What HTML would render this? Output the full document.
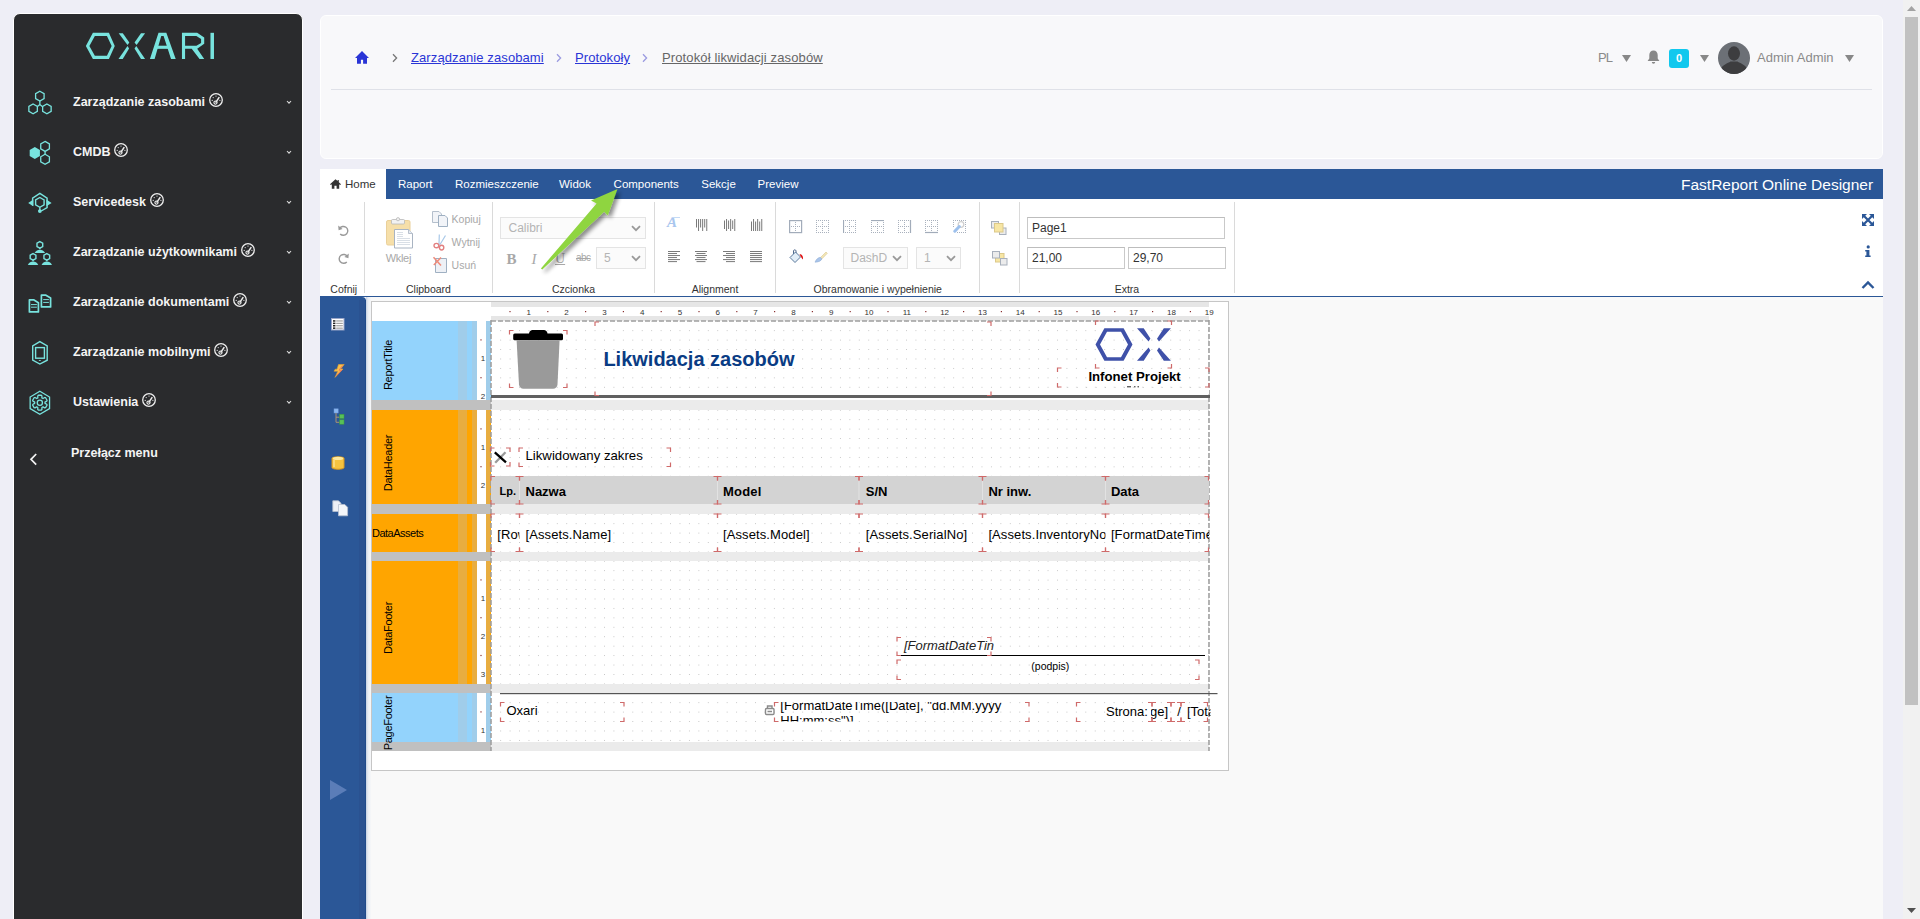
<!DOCTYPE html>
<html><head><meta charset="utf-8">
<style>
*{margin:0;padding:0;box-sizing:border-box}
html,body{width:1920px;height:919px;overflow:hidden;background:#eeeef6;font-family:"Liberation Sans",sans-serif}
.a{position:absolute}
.t{position:absolute;white-space:nowrap;line-height:1}
</style></head><body>

<div class="a" style="left:13px;top:13px;width:290px;height:920px;background:#2a2b2d;border:1px solid #fff;border-radius:7px 7px 0 0"></div>
<svg class="a" style="left:80px;top:25px" width="150" height="45" viewBox="0 0 1920 576"><g fill="#78e3de">
<path fill-rule="evenodd" d="M75 268L165 100H370L445 268L370 435H165ZM120 268L190 140H345L405 268L345 395H190Z"/>
<path d="M495 104H548L631 223L608 256Z"/><path d="M608 269L628 301L547 434H493Z"/>
<path d="M781 104H833L724 256L698 223Z"/><path d="M698 301L720 269L833 434H781Z"/>
<path d="M895 435H955L1040 140H1070L1165 435H1225L1105 100H1005Z"/><rect x="985" y="265" width="150" height="40"/>
<path fill-rule="evenodd" d="M1305 100H1500L1590 160V240L1500 305L1590 435H1530L1430 305H1345V435H1305ZM1345 140H1490L1550 180V230L1490 265H1345Z"/>
<rect x="1670" y="100" width="45" height="335"/></g></svg>
<svg class="a" style="left:24px;top:86px" width="32" height="32" viewBox="0 0 32 32"><g fill="none" stroke="#78e3de" stroke-width="1.3"><polygon points="15.85,5.30 20.09,7.75 20.09,12.65 15.85,15.10 11.61,12.65 11.61,7.75"/><polygon points="9.10,18.00 13.34,20.45 13.34,25.35 9.10,27.80 4.86,25.35 4.86,20.45"/><polygon points="22.90,18.00 27.14,20.45 27.14,25.35 22.90,27.80 18.66,25.35 18.66,20.45"/><path d="M15.85 15.1V18.6L13.4 20.5M15.85 18.6L18.3 20.5"/></g></svg>
<div class="t" style="left:73px;top:96px;font-size:12.5px;font-weight:bold;color:#f4f4f4">Zarządzanie zasobami</div>
<svg class="a" style="left:208.7px;top:93px" width="14" height="14" viewBox="0 0 14 14"><circle cx="7" cy="7" r="6.3" fill="none" stroke="#eee" stroke-width="1.3"/><path d="M6.6 9.6L10.3 4.2" stroke="#eee" stroke-width="1.5"/><circle cx="6.5" cy="9.6" r="1.6" fill="none" stroke="#eee" stroke-width="1.1"/><g fill="#eee"><circle cx="3.2" cy="7.4" r=".55"/><circle cx="4.2" cy="4.6" r=".55"/><circle cx="7" cy="3.1" r=".55"/><circle cx="10.9" cy="7.4" r=".55"/></g></svg>
<svg class="a" style="left:286px;top:100px" width="6" height="5" viewBox="0 0 6 5"><path d="M1 1L3 3.2L5 1" fill="none" stroke="#ddd" stroke-width="1.1"/></svg>
<svg class="a" style="left:24px;top:136px" width="32" height="32" viewBox="0 0 32 32"><polygon fill="#78e3de" stroke="none" points="10.80,11.10 15.91,14.05 15.91,19.95 10.80,22.90 5.69,19.95 5.69,14.05"/><g fill="none" stroke="#78e3de" stroke-width="1.3"><polygon points="21.07,5.40 25.40,7.90 25.40,12.90 21.07,15.40 16.74,12.90 16.74,7.90"/><polygon points="21.07,18.30 25.40,20.80 25.40,25.80 21.07,28.30 16.74,25.80 16.74,20.80"/><path d="M21.07 15.4V18.3"/></g></svg>
<div class="t" style="left:73px;top:146px;font-size:12.5px;font-weight:bold;color:#f4f4f4">CMDB</div>
<svg class="a" style="left:114.2px;top:143px" width="14" height="14" viewBox="0 0 14 14"><circle cx="7" cy="7" r="6.3" fill="none" stroke="#eee" stroke-width="1.3"/><path d="M6.6 9.6L10.3 4.2" stroke="#eee" stroke-width="1.5"/><circle cx="6.5" cy="9.6" r="1.6" fill="none" stroke="#eee" stroke-width="1.1"/><g fill="#eee"><circle cx="3.2" cy="7.4" r=".55"/><circle cx="4.2" cy="4.6" r=".55"/><circle cx="7" cy="3.1" r=".55"/><circle cx="10.9" cy="7.4" r=".55"/></g></svg>
<svg class="a" style="left:286px;top:150px" width="6" height="5" viewBox="0 0 6 5"><path d="M1 1L3 3.2L5 1" fill="none" stroke="#ddd" stroke-width="1.1"/></svg>
<svg class="a" style="left:24px;top:186px" width="32" height="32" viewBox="0 0 32 32"><g fill="none" stroke="#78e3de" stroke-width="1.4"><polygon points="15.85,11.50 20.09,13.95 20.09,18.85 15.85,21.30 11.61,18.85 11.61,13.95"/><path d="M8.6 19.8V12.1L15.85 7.3L23.1 12.1V21.6L17.2 25"/><path d="M15.85 21.3V24.5"/></g><g fill="#78e3de"><path d="M9.3 13.5L4.2 17L9.3 20.3Z"/><path d="M22.4 13.5L27.6 17L22.4 20.3Z"/><circle cx="15.85" cy="25.1" r="1.9"/></g></svg>
<div class="t" style="left:73px;top:196px;font-size:12.5px;font-weight:bold;color:#f4f4f4">Servicedesk</div>
<svg class="a" style="left:149.7px;top:193px" width="14" height="14" viewBox="0 0 14 14"><circle cx="7" cy="7" r="6.3" fill="none" stroke="#eee" stroke-width="1.3"/><path d="M6.6 9.6L10.3 4.2" stroke="#eee" stroke-width="1.5"/><circle cx="6.5" cy="9.6" r="1.6" fill="none" stroke="#eee" stroke-width="1.1"/><g fill="#eee"><circle cx="3.2" cy="7.4" r=".55"/><circle cx="4.2" cy="4.6" r=".55"/><circle cx="7" cy="3.1" r=".55"/><circle cx="10.9" cy="7.4" r=".55"/></g></svg>
<svg class="a" style="left:286px;top:200px" width="6" height="5" viewBox="0 0 6 5"><path d="M1 1L3 3.2L5 1" fill="none" stroke="#ddd" stroke-width="1.1"/></svg>
<svg class="a" style="left:24px;top:236px" width="32" height="32" viewBox="0 0 32 32"><polygon fill="none" stroke="#78e3de" stroke-width="1.4" points="15.85,5.60 18.71,7.25 18.71,10.55 15.85,12.20 12.99,10.55 12.99,7.25"/><path fill="#78e3de" d="M15.25 11.9h1.2v1.4h-1.2z"/><path fill="#78e3de" d="M10.649999999999999 17.1C11.85 14.500000000000002 13.85 13.8 15.85 13.8C17.85 13.8 19.85 14.500000000000002 21.05 17.1Z"/><polygon fill="none" stroke="#78e3de" stroke-width="1.4" points="9.05,17.60 11.91,19.25 11.91,22.55 9.05,24.20 6.19,22.55 6.19,19.25"/><path fill="#78e3de" d="M8.450000000000001 23.9h1.2v1.4h-1.2z"/><path fill="#78e3de" d="M3.8500000000000005 28.9C5.050000000000001 26.299999999999997 7.050000000000001 25.599999999999998 9.05 25.599999999999998C11.05 25.599999999999998 13.05 26.299999999999997 14.25 28.9Z"/><polygon fill="none" stroke="#78e3de" stroke-width="1.4" points="22.80,17.60 25.66,19.25 25.66,22.55 22.80,24.20 19.94,22.55 19.94,19.25"/><path fill="#78e3de" d="M22.2 23.9h1.2v1.4h-1.2z"/><path fill="#78e3de" d="M17.6 28.9C18.8 26.299999999999997 20.8 25.599999999999998 22.8 25.599999999999998C24.8 25.599999999999998 26.8 26.299999999999997 28.0 28.9Z"/></svg>
<div class="t" style="left:73px;top:246px;font-size:12.5px;font-weight:bold;color:#f4f4f4">Zarządzanie użytkownikami</div>
<svg class="a" style="left:240.6px;top:243px" width="14" height="14" viewBox="0 0 14 14"><circle cx="7" cy="7" r="6.3" fill="none" stroke="#eee" stroke-width="1.3"/><path d="M6.6 9.6L10.3 4.2" stroke="#eee" stroke-width="1.5"/><circle cx="6.5" cy="9.6" r="1.6" fill="none" stroke="#eee" stroke-width="1.1"/><g fill="#eee"><circle cx="3.2" cy="7.4" r=".55"/><circle cx="4.2" cy="4.6" r=".55"/><circle cx="7" cy="3.1" r=".55"/><circle cx="10.9" cy="7.4" r=".55"/></g></svg>
<svg class="a" style="left:286px;top:250px" width="6" height="5" viewBox="0 0 6 5"><path d="M1 1L3 3.2L5 1" fill="none" stroke="#ddd" stroke-width="1.1"/></svg>
<svg class="a" style="left:24px;top:286px" width="32" height="32" viewBox="0 0 32 32"><g fill="none" stroke="#78e3de" stroke-width="1.7" stroke-linejoin="round"><path d="M5.4 13.8H9.6L14.4 16.8V25.9H5.4Z"/><path d="M17.4 9.1H21.5L26.6 12.1V20.9H17.4Z"/></g><g stroke="#78e3de" stroke-width="1"><path d="M7 18.6H12.9M7 21.2H12.9M19.2 13.6H24.9M19.2 16.4H24.9"/></g></svg>
<div class="t" style="left:73px;top:296px;font-size:12.5px;font-weight:bold;color:#f4f4f4">Zarządzanie dokumentami</div>
<svg class="a" style="left:233.0px;top:293px" width="14" height="14" viewBox="0 0 14 14"><circle cx="7" cy="7" r="6.3" fill="none" stroke="#eee" stroke-width="1.3"/><path d="M6.6 9.6L10.3 4.2" stroke="#eee" stroke-width="1.5"/><circle cx="6.5" cy="9.6" r="1.6" fill="none" stroke="#eee" stroke-width="1.1"/><g fill="#eee"><circle cx="3.2" cy="7.4" r=".55"/><circle cx="4.2" cy="4.6" r=".55"/><circle cx="7" cy="3.1" r=".55"/><circle cx="10.9" cy="7.4" r=".55"/></g></svg>
<svg class="a" style="left:286px;top:300px" width="6" height="5" viewBox="0 0 6 5"><path d="M1 1L3 3.2L5 1" fill="none" stroke="#ddd" stroke-width="1.1"/></svg>
<svg class="a" style="left:24px;top:336px" width="32" height="32" viewBox="0 0 32 32"><g fill="none" stroke="#78e3de" stroke-width="1.4"><path d="M15.85 5.6L23.2 9.8V24.2L15.85 28L8.7 24.2V9.8Z"/><rect x="11.6" y="11.6" width="8.8" height="10.6"/></g><ellipse fill="#78e3de" cx="15.85" cy="24.5" rx="1.1" ry="0.6"/></svg>
<div class="t" style="left:73px;top:346px;font-size:12.5px;font-weight:bold;color:#f4f4f4">Zarządzanie mobilnymi</div>
<svg class="a" style="left:214.2px;top:343px" width="14" height="14" viewBox="0 0 14 14"><circle cx="7" cy="7" r="6.3" fill="none" stroke="#eee" stroke-width="1.3"/><path d="M6.6 9.6L10.3 4.2" stroke="#eee" stroke-width="1.5"/><circle cx="6.5" cy="9.6" r="1.6" fill="none" stroke="#eee" stroke-width="1.1"/><g fill="#eee"><circle cx="3.2" cy="7.4" r=".55"/><circle cx="4.2" cy="4.6" r=".55"/><circle cx="7" cy="3.1" r=".55"/><circle cx="10.9" cy="7.4" r=".55"/></g></svg>
<svg class="a" style="left:286px;top:350px" width="6" height="5" viewBox="0 0 6 5"><path d="M1 1L3 3.2L5 1" fill="none" stroke="#ddd" stroke-width="1.1"/></svg>
<svg class="a" style="left:24px;top:386px" width="32" height="32" viewBox="0 0 32 32"><g fill="none" stroke="#78e3de" stroke-width="1.3"><polygon points="15.85,5.26 25.55,11.03 25.55,22.57 15.85,28.34 6.15,22.57 6.15,11.03"/><polygon stroke-linejoin="round" points="13.77,9.91 14.40,9.24 17.30,9.24 17.93,9.91 17.88,11.91 18.98,12.55 20.69,11.51 21.59,11.71 23.04,14.23 22.77,15.10 21.01,16.07 21.01,17.33 22.77,18.30 23.04,19.17 21.59,21.69 20.69,21.89 18.98,20.85 17.88,21.49 17.93,23.49 17.30,24.16 14.40,24.16 13.77,23.49 13.82,21.49 12.72,20.85 11.01,21.89 10.11,21.69 8.66,19.17 8.93,18.30 10.69,17.33 10.69,16.07 8.93,15.10 8.66,14.23 10.11,11.71 11.01,11.51 12.72,12.55 13.82,11.91"/><circle cx="15.85" cy="16.7" r="2.6"/></g></svg>
<div class="t" style="left:73px;top:396px;font-size:12.5px;font-weight:bold;color:#f4f4f4">Ustawienia</div>
<svg class="a" style="left:142.0px;top:393px" width="14" height="14" viewBox="0 0 14 14"><circle cx="7" cy="7" r="6.3" fill="none" stroke="#eee" stroke-width="1.3"/><path d="M6.6 9.6L10.3 4.2" stroke="#eee" stroke-width="1.5"/><circle cx="6.5" cy="9.6" r="1.6" fill="none" stroke="#eee" stroke-width="1.1"/><g fill="#eee"><circle cx="3.2" cy="7.4" r=".55"/><circle cx="4.2" cy="4.6" r=".55"/><circle cx="7" cy="3.1" r=".55"/><circle cx="10.9" cy="7.4" r=".55"/></g></svg>
<svg class="a" style="left:286px;top:400px" width="6" height="5" viewBox="0 0 6 5"><path d="M1 1L3 3.2L5 1" fill="none" stroke="#ddd" stroke-width="1.1"/></svg>
<svg class="a" style="left:28px;top:452px" width="12" height="15" viewBox="0 0 12 15"><path d="M8.2 2L3 7.3L8.2 12.6" fill="none" stroke="#f4f4f4" stroke-width="1.7"/></svg>
<div class="t" style="left:71px;top:447px;font-size:12.5px;font-weight:bold;color:#f4f4f4">Przełącz menu</div>
<div class="a" style="left:320px;top:15px;width:1563px;height:144px;background:#f8f8fa;border:1px solid #fff;border-radius:6px"></div>
<div class="a" style="left:331px;top:89px;width:1541px;height:1px;background:#dfe1e8"></div>
<svg class="a" style="left:354px;top:50px" width="16" height="15" viewBox="0 0 16 15"><path fill="#2a35d6" d="M8 0.9L1 8.1H3V13.8H6.9V9.8H9.1V13.8H13V8.1H15Z"/></svg>
<svg class="a" style="left:392px;top:53px" width="6" height="10" viewBox="0 0 6 10"><path d="M1 1.2L4.6 5L1 8.8" fill="none" stroke="#777" stroke-width="1.3"/></svg>
<div class="t" style="left:411px;top:51px;font-size:13px;letter-spacing:0.1px;color:#2a35d6;text-decoration:underline;text-underline-offset:1px">Zarządzanie zasobami</div>
<svg class="a" style="left:556px;top:53px" width="6" height="10" viewBox="0 0 6 10"><path d="M1 1.2L4.6 5L1 8.8" fill="none" stroke="#9b9be0" stroke-width="1.3"/></svg>
<div class="t" style="left:575px;top:51px;font-size:13px;letter-spacing:0.1px;color:#2a35d6;text-decoration:underline;text-underline-offset:1px">Protokoły</div>
<svg class="a" style="left:642px;top:53px" width="6" height="10" viewBox="0 0 6 10"><path d="M1 1.2L4.6 5L1 8.8" fill="none" stroke="#9b9be0" stroke-width="1.3"/></svg>
<div class="t" style="left:662px;top:51px;font-size:13px;letter-spacing:0.12px;color:#666;text-decoration:underline;text-underline-offset:1px">Protokół likwidacji zasobów</div>
<div class="t" style="left:1598px;top:51px;font-size:13px;color:#8a8a8a;letter-spacing:-0.8px">PL</div>
<svg class="a" style="left:1622px;top:54.5px" width="9" height="7" viewBox="0 0 9 7"><path d="M0 0H9L4.5 7Z" fill="#888"/></svg>
<svg class="a" style="left:1647px;top:50px" width="13" height="14" viewBox="0 0 13 14"><path fill="#888" d="M6.5 0.5C4 0.5 2.3 2.5 2.3 5V8.6L0.6 11H12.4L10.7 8.6V5C10.7 2.5 9 0.5 6.5 0.5Z"/><path fill="#888" d="M4.8 12A1.7 1.7 0 0 0 8.2 12Z"/></svg>
<div class="a" style="left:1669px;top:49px;width:20px;height:19px;background:#11c8ee;border-radius:3px"></div>
<div class="t" style="left:1669px;top:53px;width:20px;text-align:center;font-size:11px;font-weight:bold;color:#fff">0</div>
<svg class="a" style="left:1699.5px;top:54.5px" width="9" height="7" viewBox="0 0 9 7"><path d="M0 0H9L4.5 7Z" fill="#888"/></svg>
<svg class="a" style="left:1718px;top:42px" width="32" height="32" viewBox="0 0 32 32"><defs><clipPath id="av"><circle cx="16" cy="16" r="16"/></clipPath></defs><circle cx="16" cy="16" r="16" fill="#6c7076"/><g clip-path="url(#av)" fill="#3d3d3f"><ellipse cx="16" cy="11.5" rx="6" ry="7.2"/><path d="M2 29C4 22 10 21.5 12.5 19.5H19.5C22 21.5 28 22 30 29V32H2Z"/></g></svg>
<div class="t" style="left:1757px;top:51px;font-size:13px;color:#8a8a8a">Admin Admin</div>
<svg class="a" style="left:1845px;top:54.5px" width="9" height="7" viewBox="0 0 9 7"><path d="M0 0H9L4.5 7Z" fill="#888"/></svg>
<div class="a" style="left:1903px;top:0;width:17px;height:919px;background:#f1f1f1"></div>
<div class="a" style="left:1905px;top:17px;width:13px;height:688px;background:#c1c1c1"></div>
<svg class="a" style="left:1907px;top:6px" width="9" height="5" viewBox="0 0 9 5"><path d="M0 5H9L4.5 0Z" fill="#a3a3a3"/></svg>
<svg class="a" style="left:1907px;top:908px" width="9" height="5" viewBox="0 0 9 5"><path d="M0 0H9L4.5 5Z" fill="#505050"/></svg>
<div class="a" style="left:320px;top:169px;width:1563px;height:750px;background:#f9f9f9"></div>
<div class="a" style="left:320px;top:169px;width:1563px;height:30px;background:#2b5797"></div>
<div class="a" style="left:320px;top:169px;width:66px;height:30px;background:#fff"></div>
<div class="a" style="left:320px;top:199px;width:1563px;height:97px;background:#fff"></div>
<div class="a" style="left:320px;top:296px;width:1563px;height:1px;background:#2b5797"></div>
<svg class="a" style="left:330px;top:179px" width="11" height="10" viewBox="0 0 11 10"><path fill="#333" d="M5.5 0.3L0 5.2L0.9 6.1L1.8 5.3V9.7H4.4V6.8H6.6V9.7H9.2V5.3L10.1 6.1L11 5.2L8.8 3.2V0.9H7.6V2.1Z"/></svg>
<div class="t" style="left:345px;top:178.8px;font-size:11.5px;color:#333">Home</div>
<div class="t" style="left:398px;top:178.8px;font-size:11.5px;color:#fff">Raport</div>
<div class="t" style="left:455px;top:178.8px;font-size:11.5px;color:#fff">Rozmieszczenie</div>
<div class="t" style="left:559px;top:178.8px;font-size:11.5px;color:#fff">Widok</div>
<div class="t" style="left:613.6px;top:178.8px;font-size:11.5px;color:#fff">Components</div>
<div class="t" style="left:701.3px;top:178.8px;font-size:11.5px;color:#fff">Sekcje</div>
<div class="t" style="left:757.6px;top:178.8px;font-size:11.5px;color:#fff">Preview</div>
<div class="t" style="left:1681px;top:177.2px;font-size:15.5px;color:#fff">FastReport Online Designer</div>
<div class="a" style="left:364px;top:202px;width:1px;height:91px;background:#dadada"></div>
<div class="a" style="left:492px;top:202px;width:1px;height:91px;background:#dadada"></div>
<div class="a" style="left:654px;top:202px;width:1px;height:91px;background:#dadada"></div>
<div class="a" style="left:775px;top:202px;width:1px;height:91px;background:#dadada"></div>
<div class="a" style="left:979px;top:202px;width:1px;height:91px;background:#dadada"></div>
<div class="a" style="left:1019px;top:202px;width:1px;height:91px;background:#dadada"></div>
<div class="a" style="left:1234px;top:202px;width:1px;height:91px;background:#dadada"></div>
<div class="t" style="left:243.75px;width:200px;text-align:center;top:283.8px;font-size:10.5px;color:#333">Cofnij</div>
<div class="t" style="left:328.5px;width:200px;text-align:center;top:283.8px;font-size:10.5px;color:#333">Clipboard</div>
<div class="t" style="left:473.5px;width:200px;text-align:center;top:283.8px;font-size:10.5px;color:#333">Czcionka</div>
<div class="t" style="left:615px;width:200px;text-align:center;top:283.8px;font-size:10.5px;color:#333">Alignment</div>
<div class="t" style="left:777.75px;width:200px;text-align:center;top:283.8px;font-size:10.5px;color:#333">Obramowanie i wypełnienie</div>
<div class="t" style="left:1026.9px;width:200px;text-align:center;top:283.8px;font-size:10.5px;color:#333">Extra</div>
<svg class="a" style="left:337px;top:224px" width="13" height="13" viewBox="0 0 13 13"><path d="M2.6 4.6A4.4 4.4 0 1 1 3.2 9.9" fill="none" stroke="#999" stroke-width="1.4"/><path d="M1.2 1.6L1.6 6.2L5.6 5Z" fill="#999"/></svg>
<svg class="a" style="left:337px;top:252px" width="13" height="13" viewBox="0 0 13 13"><path d="M10.4 4.6A4.4 4.4 0 1 0 9.8 9.9" fill="none" stroke="#999" stroke-width="1.4"/><path d="M11.8 1.6L11.4 6.2L7.4 5Z" fill="#999"/></svg>
<svg class="a" style="left:385px;top:217px" width="29" height="33" viewBox="0 0 29 33">
<rect x="1.5" y="3.5" width="23.5" height="24.5" rx="1.5" fill="#f6dfa9" stroke="#ead09a"/>
<rect x="6.5" y="2.5" width="13" height="4.5" rx="1" fill="#f2f2f2" stroke="#b8b8b8" stroke-width=".8"/>
<circle cx="13" cy="2.2" r="1.6" fill="#f2f2f2" stroke="#b8b8b8" stroke-width=".8"/>
<path d="M9.5 12.5H23.5L27.5 16.5V31H9.5Z" fill="#fff" stroke="#a9b4c2"/>
<path d="M23.5 12.5V16.5H27.5" fill="#e6ebf2" stroke="#a9b4c2" stroke-width=".8"/>
<g stroke="#d5dbe3" stroke-width=".9"><path d="M12 15.5H18M12 17.5H18M12 19.5H18M12 21.5H25M12 23.5H25M12 25.5H25M12 27.5H25"/></g>
</svg>
<div class="t" style="left:385.7px;top:252.8px;font-size:11px;letter-spacing:-0.3px;color:#a8a8a8">Wklej</div>
<svg class="a" style="left:431px;top:210px" width="18" height="18" viewBox="0 0 18 18">
<path d="M1.5 1.5H8L10.5 4V12.5H1.5Z" fill="#f2f4f8" stroke="#b4bfcc"/>
<path d="M7.5 5.5H14L16.5 8V16.5H7.5Z" fill="#f2f4f8" stroke="#9fb0c2"/>
</svg>
<div class="t" style="left:451.6px;top:213.5px;font-size:10.5px;color:#a8a8a8">Kopiuj</div>
<svg class="a" style="left:433px;top:233px" width="14" height="18" viewBox="0 0 14 18">
<path d="M6.3 1.5L6 12M12.5 2.5L7 11.5" stroke="#a8c8e8" stroke-width="1.2" fill="none"/>
<ellipse cx="3.4" cy="12.6" rx="2.4" ry="2.2" fill="none" stroke="#e28080" stroke-width="1.4"/>
<ellipse cx="8.6" cy="14.6" rx="2.2" ry="2.4" fill="none" stroke="#e28080" stroke-width="1.4"/>
</svg>
<div class="t" style="left:451.6px;top:236.8px;font-size:10.5px;color:#a8a8a8">Wytnij</div>
<svg class="a" style="left:432px;top:256px" width="17" height="18" viewBox="0 0 17 18">
<path d="M3.5 2.5H14.5V16.5H3.5Z" fill="#eef1f6" stroke="#9fb0c2"/>
<path d="M1.5 1.2L9 9.5M9 1.5L1.8 9" stroke="#ef8b7a" stroke-width="1.5"/>
</svg>
<div class="t" style="left:451.6px;top:259.6px;font-size:10.5px;color:#a8a8a8">Usuń</div>
<div class="a" style="left:500px;top:217px;width:146px;height:22px;background:#fbfbfb;border:1px solid #e4e4e4"></div>
<div class="t" style="left:508.5px;top:221.8px;font-size:12px;color:#b4b4b4">Calibri</div>
<svg class="a" style="left:631px;top:224.5px" width="10" height="7" viewBox="0 0 10 7"><path d="M1 1.2L5 5.2L9 1.2" fill="none" stroke="#999" stroke-width="1.8"/></svg>
<div class="a" style="left:596px;top:247px;width:50px;height:22px;background:#fbfbfb;border:1px solid #e4e4e4"></div>
<div class="t" style="left:604px;top:251.8px;font-size:12px;color:#b4b4b4">5</div>
<svg class="a" style="left:631px;top:254.5px" width="10" height="7" viewBox="0 0 10 7"><path d="M1 1.2L5 5.2L9 1.2" fill="none" stroke="#999" stroke-width="1.8"/></svg>
<div class="t" style="left:506.5px;top:251.5px;font-family:'Liberation Serif',serif;font-weight:bold;font-size:15px;color:#a8a8a8">B</div>
<div class="t" style="left:531.5px;top:251.5px;font-family:'Liberation Serif',serif;font-style:italic;font-size:15px;color:#a8a8a8">I</div>
<div class="t" style="left:555px;top:251.5px;font-family:'Liberation Serif',serif;font-size:14px;color:#a8a8a8;text-decoration:underline">U</div>
<div class="t" style="left:576px;top:253px;font-size:10px;letter-spacing:-0.5px;color:#a8a8a8;text-decoration:line-through">abc</div>
<div class="t" style="left:667px;top:215px;font-family:'Liberation Serif',serif;font-weight:bold;font-style:italic;font-size:15px;color:#a9c6ee">A</div>
<div class="a" style="left:672px;top:217px;width:8px;height:1px;background:#c5daf5"></div>
<svg class="a" style="left:696px;top:218px" width="13" height="14" viewBox="0 0 13 14"><g stroke="#7a7a7a" stroke-width="1"><path d="M0.50 1V9.5"/><path d="M2.55 1V13"/><path d="M4.60 1V9.5"/><path d="M6.65 1V13"/><path d="M8.70 1V9.5"/><path d="M10.75 1V13"/></g></svg>
<svg class="a" style="left:724px;top:218px" width="13" height="14" viewBox="0 0 13 14"><g stroke="#7a7a7a" stroke-width="1"><path d="M0.50 2.5V11"/><path d="M2.55 1V13"/><path d="M4.60 2.5V11"/><path d="M6.65 1V13"/><path d="M8.70 2.5V11"/><path d="M10.75 1V13"/></g></svg>
<svg class="a" style="left:751px;top:218px" width="13" height="14" viewBox="0 0 13 14"><g stroke="#7a7a7a" stroke-width="1"><path d="M0.50 3.5V13"/><path d="M2.55 1V13"/><path d="M4.60 3.5V13"/><path d="M6.65 1V13"/><path d="M8.70 3.5V13"/><path d="M10.75 1V13"/></g></svg>
<svg class="a" style="left:668px;top:251px" width="13" height="12" viewBox="0 0 13 12"><g stroke="#7a7a7a" stroke-width="1"><path d="M0 0.50H12"/><path d="M0 2.52H9"/><path d="M0 4.54H12"/><path d="M0 6.56H9"/><path d="M0 8.58H12"/><path d="M0 10.60H9"/></g></svg>
<svg class="a" style="left:695px;top:251px" width="13" height="12" viewBox="0 0 13 12"><g stroke="#7a7a7a" stroke-width="1"><path d="M0 0.50H12"/><path d="M1.5 2.52H10.5"/><path d="M0 4.54H12"/><path d="M1.5 6.56H10.5"/><path d="M0 8.58H12"/><path d="M1.5 10.60H10.5"/></g></svg>
<svg class="a" style="left:723px;top:251px" width="13" height="12" viewBox="0 0 13 12"><g stroke="#7a7a7a" stroke-width="1"><path d="M0 0.50H12"/><path d="M3 2.52H12"/><path d="M0 4.54H12"/><path d="M3 6.56H12"/><path d="M0 8.58H12"/><path d="M3 10.60H12"/></g></svg>
<svg class="a" style="left:750px;top:251px" width="13" height="12" viewBox="0 0 13 12"><g stroke="#7a7a7a" stroke-width="1"><path d="M0 0.50H12"/><path d="M0 2.52H12"/><path d="M0 4.54H12"/><path d="M0 6.56H12"/><path d="M0 8.58H12"/><path d="M0 10.60H12"/></g></svg>
<svg class="a" style="left:789px;top:220px" width="14" height="14" viewBox="0 0 14 14"><rect x=".6" y=".6" width="12" height="12" fill="none" stroke="#a2acba" stroke-width="1.2"/><g fill="#a9b1bd"><rect x="6" y="2" width="1" height="1"/><rect x="6" y="4" width="1" height="1"/><rect x="6" y="8" width="1" height="1"/><rect x="6" y="10" width="1" height="1"/><rect x="2" y="6" width="1" height="1"/><rect x="4" y="6" width="1" height="1"/><rect x="6" y="6" width="1" height="1"/><rect x="8" y="6" width="1" height="1"/><rect x="10" y="6" width="1" height="1"/></g></svg>
<svg class="a" style="left:816px;top:220px" width="14" height="14" viewBox="0 0 14 14"><g fill="#a9b1bd"><rect x="0" y="0" width="1" height="1"/><rect x="0" y="2" width="1" height="1"/><rect x="0" y="4" width="1" height="1"/><rect x="0" y="6" width="1" height="1"/><rect x="0" y="8" width="1" height="1"/><rect x="0" y="10" width="1" height="1"/><rect x="0" y="12" width="1" height="1"/><rect x="2" y="0" width="1" height="1"/><rect x="2" y="6" width="1" height="1"/><rect x="2" y="12" width="1" height="1"/><rect x="4" y="0" width="1" height="1"/><rect x="4" y="6" width="1" height="1"/><rect x="4" y="12" width="1" height="1"/><rect x="6" y="0" width="1" height="1"/><rect x="6" y="2" width="1" height="1"/><rect x="6" y="4" width="1" height="1"/><rect x="6" y="6" width="1" height="1"/><rect x="6" y="8" width="1" height="1"/><rect x="6" y="10" width="1" height="1"/><rect x="6" y="12" width="1" height="1"/><rect x="8" y="0" width="1" height="1"/><rect x="8" y="6" width="1" height="1"/><rect x="8" y="12" width="1" height="1"/><rect x="10" y="0" width="1" height="1"/><rect x="10" y="6" width="1" height="1"/><rect x="10" y="12" width="1" height="1"/><rect x="12" y="0" width="1" height="1"/><rect x="12" y="2" width="1" height="1"/><rect x="12" y="4" width="1" height="1"/><rect x="12" y="6" width="1" height="1"/><rect x="12" y="8" width="1" height="1"/><rect x="12" y="10" width="1" height="1"/><rect x="12" y="12" width="1" height="1"/></g></svg>
<svg class="a" style="left:843px;top:220px" width="14" height="14" viewBox="0 0 14 14"><g fill="#a9b1bd"><rect x="0" y="0" width="1" height="1"/><rect x="0" y="2" width="1" height="1"/><rect x="0" y="4" width="1" height="1"/><rect x="0" y="6" width="1" height="1"/><rect x="0" y="8" width="1" height="1"/><rect x="0" y="10" width="1" height="1"/><rect x="0" y="12" width="1" height="1"/><rect x="2" y="0" width="1" height="1"/><rect x="2" y="6" width="1" height="1"/><rect x="2" y="12" width="1" height="1"/><rect x="4" y="0" width="1" height="1"/><rect x="4" y="6" width="1" height="1"/><rect x="4" y="12" width="1" height="1"/><rect x="6" y="0" width="1" height="1"/><rect x="6" y="2" width="1" height="1"/><rect x="6" y="4" width="1" height="1"/><rect x="6" y="6" width="1" height="1"/><rect x="6" y="8" width="1" height="1"/><rect x="6" y="10" width="1" height="1"/><rect x="6" y="12" width="1" height="1"/><rect x="8" y="0" width="1" height="1"/><rect x="8" y="6" width="1" height="1"/><rect x="8" y="12" width="1" height="1"/><rect x="10" y="0" width="1" height="1"/><rect x="10" y="6" width="1" height="1"/><rect x="10" y="12" width="1" height="1"/><rect x="12" y="0" width="1" height="1"/><rect x="12" y="2" width="1" height="1"/><rect x="12" y="4" width="1" height="1"/><rect x="12" y="6" width="1" height="1"/><rect x="12" y="8" width="1" height="1"/><rect x="12" y="10" width="1" height="1"/><rect x="12" y="12" width="1" height="1"/></g><path d="M.5 0V13" stroke="#a2acba" stroke-width="1.2" fill="none"/></svg>
<svg class="a" style="left:870.5px;top:220px" width="14" height="14" viewBox="0 0 14 14"><g fill="#a9b1bd"><rect x="0" y="0" width="1" height="1"/><rect x="0" y="2" width="1" height="1"/><rect x="0" y="4" width="1" height="1"/><rect x="0" y="6" width="1" height="1"/><rect x="0" y="8" width="1" height="1"/><rect x="0" y="10" width="1" height="1"/><rect x="0" y="12" width="1" height="1"/><rect x="2" y="0" width="1" height="1"/><rect x="2" y="6" width="1" height="1"/><rect x="2" y="12" width="1" height="1"/><rect x="4" y="0" width="1" height="1"/><rect x="4" y="6" width="1" height="1"/><rect x="4" y="12" width="1" height="1"/><rect x="6" y="0" width="1" height="1"/><rect x="6" y="2" width="1" height="1"/><rect x="6" y="4" width="1" height="1"/><rect x="6" y="6" width="1" height="1"/><rect x="6" y="8" width="1" height="1"/><rect x="6" y="10" width="1" height="1"/><rect x="6" y="12" width="1" height="1"/><rect x="8" y="0" width="1" height="1"/><rect x="8" y="6" width="1" height="1"/><rect x="8" y="12" width="1" height="1"/><rect x="10" y="0" width="1" height="1"/><rect x="10" y="6" width="1" height="1"/><rect x="10" y="12" width="1" height="1"/><rect x="12" y="0" width="1" height="1"/><rect x="12" y="2" width="1" height="1"/><rect x="12" y="4" width="1" height="1"/><rect x="12" y="6" width="1" height="1"/><rect x="12" y="8" width="1" height="1"/><rect x="12" y="10" width="1" height="1"/><rect x="12" y="12" width="1" height="1"/></g><path d="M0 .5H13" stroke="#a2acba" stroke-width="1.2" fill="none"/></svg>
<svg class="a" style="left:897.5px;top:220px" width="14" height="14" viewBox="0 0 14 14"><g fill="#a9b1bd"><rect x="0" y="0" width="1" height="1"/><rect x="0" y="2" width="1" height="1"/><rect x="0" y="4" width="1" height="1"/><rect x="0" y="6" width="1" height="1"/><rect x="0" y="8" width="1" height="1"/><rect x="0" y="10" width="1" height="1"/><rect x="0" y="12" width="1" height="1"/><rect x="2" y="0" width="1" height="1"/><rect x="2" y="6" width="1" height="1"/><rect x="2" y="12" width="1" height="1"/><rect x="4" y="0" width="1" height="1"/><rect x="4" y="6" width="1" height="1"/><rect x="4" y="12" width="1" height="1"/><rect x="6" y="0" width="1" height="1"/><rect x="6" y="2" width="1" height="1"/><rect x="6" y="4" width="1" height="1"/><rect x="6" y="6" width="1" height="1"/><rect x="6" y="8" width="1" height="1"/><rect x="6" y="10" width="1" height="1"/><rect x="6" y="12" width="1" height="1"/><rect x="8" y="0" width="1" height="1"/><rect x="8" y="6" width="1" height="1"/><rect x="8" y="12" width="1" height="1"/><rect x="10" y="0" width="1" height="1"/><rect x="10" y="6" width="1" height="1"/><rect x="10" y="12" width="1" height="1"/><rect x="12" y="0" width="1" height="1"/><rect x="12" y="2" width="1" height="1"/><rect x="12" y="4" width="1" height="1"/><rect x="12" y="6" width="1" height="1"/><rect x="12" y="8" width="1" height="1"/><rect x="12" y="10" width="1" height="1"/><rect x="12" y="12" width="1" height="1"/></g><path d="M12.5 0V13" stroke="#a2acba" stroke-width="1.2" fill="none"/></svg>
<svg class="a" style="left:924.5px;top:220px" width="14" height="14" viewBox="0 0 14 14"><g fill="#a9b1bd"><rect x="0" y="0" width="1" height="1"/><rect x="0" y="2" width="1" height="1"/><rect x="0" y="4" width="1" height="1"/><rect x="0" y="6" width="1" height="1"/><rect x="0" y="8" width="1" height="1"/><rect x="0" y="10" width="1" height="1"/><rect x="0" y="12" width="1" height="1"/><rect x="2" y="0" width="1" height="1"/><rect x="2" y="6" width="1" height="1"/><rect x="2" y="12" width="1" height="1"/><rect x="4" y="0" width="1" height="1"/><rect x="4" y="6" width="1" height="1"/><rect x="4" y="12" width="1" height="1"/><rect x="6" y="0" width="1" height="1"/><rect x="6" y="2" width="1" height="1"/><rect x="6" y="4" width="1" height="1"/><rect x="6" y="6" width="1" height="1"/><rect x="6" y="8" width="1" height="1"/><rect x="6" y="10" width="1" height="1"/><rect x="6" y="12" width="1" height="1"/><rect x="8" y="0" width="1" height="1"/><rect x="8" y="6" width="1" height="1"/><rect x="8" y="12" width="1" height="1"/><rect x="10" y="0" width="1" height="1"/><rect x="10" y="6" width="1" height="1"/><rect x="10" y="12" width="1" height="1"/><rect x="12" y="0" width="1" height="1"/><rect x="12" y="2" width="1" height="1"/><rect x="12" y="4" width="1" height="1"/><rect x="12" y="6" width="1" height="1"/><rect x="12" y="8" width="1" height="1"/><rect x="12" y="10" width="1" height="1"/><rect x="12" y="12" width="1" height="1"/></g><path d="M0 12.5H13" stroke="#a2acba" stroke-width="1.2" fill="none"/></svg>
<svg class="a" style="left:952.5px;top:220px" width="14" height="14" viewBox="0 0 14 14"><g fill="#a9b1bd"><rect x="0" y="0" width="1" height="1"/><rect x="2" y="0" width="1" height="1"/><rect x="4" y="0" width="1" height="1"/><rect x="6" y="0" width="1" height="1"/><rect x="8" y="0" width="1" height="1"/><rect x="10" y="0" width="1" height="1"/><rect x="12" y="0" width="1" height="1"/><rect x="0" y="2" width="1" height="1"/><rect x="0" y="4" width="1" height="1"/><rect x="0" y="6" width="1" height="1"/><rect x="12" y="2" width="1" height="1"/><rect x="12" y="4" width="1" height="1"/><rect x="12" y="6" width="1" height="1"/><rect x="12" y="8" width="1" height="1"/><rect x="12" y="10" width="1" height="1"/><rect x="4" y="12" width="1" height="1"/><rect x="6" y="12" width="1" height="1"/><rect x="8" y="12" width="1" height="1"/><rect x="10" y="12" width="1" height="1"/><rect x="12" y="12" width="1" height="1"/></g>
<circle cx="8" cy="4.5" r="2.8" fill="none" stroke="#d0d0d0" stroke-width="1.3"/><path d="M6.3 6.5L1.8 11.2" stroke="#9dc0ec" stroke-width="3" stroke-linecap="round"/></svg>
<svg class="a" style="left:789px;top:249px" width="16" height="15" viewBox="0 0 16 15"><path d="M4.5 5V1.8A1.3 1.3 0 0 1 7 1.8V6.5" fill="none" stroke="#3d5a80" stroke-width=".9"/><path d="M1 8.5L6.5 3L11.5 8L6 13.5Z" fill="#e2eef8" stroke="#4a6a90" stroke-width=".9"/><path d="M10.5 5.2C13 5 14.3 7 14 10.5L13 9.5L12 8Z" fill="#e01010"/></svg>
<svg class="a" style="left:813.5px;top:250.5px" width="14" height="12" viewBox="0 0 14 12"><path d="M6.5 6.5L12 1L13.3 2.3L8 7.8Z" fill="#f3e6b6" stroke="#d8c890" stroke-width=".6"/><path d="M1 11.2C2 8.5 4 6.6 6.3 6.3L8 7.9C7 10 4.3 11.2 1 11.2Z" fill="#a9c4ea" stroke="#8aa8d0" stroke-width=".5"/></svg>
<div class="a" style="left:843px;top:247px;width:65px;height:22px;background:#fbfbfb;border:1px solid #e4e4e4"></div>
<div class="t" style="left:850.5px;top:251.8px;font-size:12px;color:#b4b4b4">DashD</div>
<svg class="a" style="left:891.5px;top:254.5px" width="10" height="7" viewBox="0 0 10 7"><path d="M1 1.2L5 5.2L9 1.2" fill="none" stroke="#999" stroke-width="1.8"/></svg>
<div class="a" style="left:916px;top:247px;width:45px;height:22px;background:#fbfbfb;border:1px solid #e4e4e4"></div>
<div class="t" style="left:924px;top:251.8px;font-size:12px;color:#b4b4b4">1</div>
<svg class="a" style="left:946px;top:254.5px" width="10" height="7" viewBox="0 0 10 7"><path d="M1 1.2L5 5.2L9 1.2" fill="none" stroke="#999" stroke-width="1.8"/></svg>
<svg class="a" style="left:990px;top:220px" width="17" height="16" viewBox="0 0 17 16"><rect x="1.5" y="1.5" width="7" height="6.5" fill="#ececec" stroke="#a8b0bc"/><rect x="9.5" y="8" width="6.5" height="6.5" fill="#ececec" stroke="#a8b0bc"/><rect x="4.5" y="3.5" width="8.5" height="8.5" fill="#f7e6a4" stroke="#dcc98a"/></svg>
<svg class="a" style="left:991px;top:250px" width="17" height="16" viewBox="0 0 17 16"><rect x="4.5" y="3.5" width="8.5" height="8.5" fill="#f7e6a4" stroke="#dcc98a"/><rect x="1.5" y="1.5" width="7" height="6.5" fill="#ececec" stroke="#a8b0bc"/><rect x="9.5" y="8.5" width="6.5" height="6.5" fill="#ececec" stroke="#a8b0bc"/></svg>
<div class="a" style="left:1027px;top:217px;width:198px;height:22px;background:#fff;border:1px solid #c9c9c9;border-top-color:#bdbdbd"></div>
<div class="t" style="left:1032px;top:222px;font-size:12px;color:#333">Page1</div>
<div class="a" style="left:1027px;top:247px;width:98px;height:22px;background:#fff;border:1px solid #c9c9c9;border-top-color:#bdbdbd"></div>
<div class="t" style="left:1032px;top:252px;font-size:12px;color:#333">21,00</div>
<div class="a" style="left:1128px;top:247px;width:98px;height:22px;background:#fff;border:1px solid #c9c9c9;border-top-color:#bdbdbd"></div>
<div class="t" style="left:1133px;top:252px;font-size:12px;color:#333">29,70</div>
<svg class="a" style="left:1861px;top:213px" width="14" height="14" viewBox="0 0 14 14"><g fill="#2b5797"><path d="M1 1H6L1 6Z"/><path d="M13 1V6L8 1Z"/><path d="M1 13V8L6 13Z"/><path d="M13 13H8L13 8Z"/></g><path d="M2.5 2.5L11.5 11.5M11.5 2.5L2.5 11.5" stroke="#2b5797" stroke-width="2.2"/></svg>
<svg class="a" style="left:1864px;top:245px" width="8" height="13" viewBox="0 0 8 13"><g fill="#2b5797"><circle cx="4.2" cy="1.9" r="1.6"/><path d="M1.2 5H5.4V10.6H6.6V12H1.2V10.6H2.4V6.4H1.2Z"/></g></svg>
<svg class="a" style="left:1861px;top:280px" width="14" height="10" viewBox="0 0 14 10"><path d="M1.5 8L7 2.5L12.5 8" fill="none" stroke="#2b5797" stroke-width="2.4"/></svg>
<div class="a" style="left:320px;top:297px;width:46px;height:622px;background:#2b5797;border-radius:0 4px 0 0"></div>
<div class="a" style="left:359px;top:300px;width:7px;height:619px;background:#2a5291"></div>
<div class="a" style="left:365px;top:300px;width:1px;height:619px;background:#1f4a8a"></div>
<div class="a" style="left:366px;top:297px;width:5px;height:622px;background:linear-gradient(90deg,#c3cfe2,#e9edf3 40%,#f7f8f9)"></div>
<svg class="a" style="left:331px;top:318px" width="14" height="13" viewBox="0 0 14 13"><rect x=".5" y=".5" width="12.5" height="11.5" fill="#fff" stroke="#9aa6c8"/><g fill="#222"><rect x="2" y="2.2" width="2.4" height="1.5"/><rect x="2" y="4.6" width="2.4" height="1.5"/><rect x="2" y="7" width="2.4" height="1.5"/><rect x="2" y="9.4" width="2.4" height="1.5"/></g><g fill="#999"><rect x="5.2" y="2.4" width="6.6" height="1.1"/><rect x="5.2" y="4.8" width="6.6" height="1.1"/><rect x="5.2" y="7.2" width="6.6" height="1.1"/><rect x="5.2" y="9.6" width="6.6" height="1.1"/></g></svg>
<svg class="a" style="left:333px;top:364px" width="12" height="14" viewBox="0 0 12 14"><path d="M5.5 0.5H11.2L7.6 5H10L2 13.4L4.8 7.2H1L2.2 5.2H4Z" fill="#f9c24a" stroke="#e8a030" stroke-width=".6"/><path d="M9.5 1.5L6 6.2H8.5L3.5 11.5" fill="none" stroke="#f07060" stroke-width=".9"/></svg>
<svg class="a" style="left:333px;top:408px" width="12" height="17" viewBox="0 0 12 17"><rect x="1" y="0.8" width="4.2" height="4.2" fill="#8ab6f0" stroke="#6a96d8" stroke-width=".5"/><path d="M3 5V14.3H6.5M3 9.2H6.5" fill="none" stroke="#b89870" stroke-width=".9"/><rect x="6.6" y="6.3" width="4.4" height="4.2" fill="#58c058" stroke="#3a9a3a" stroke-width=".5"/><rect x="6.6" y="11.8" width="4.4" height="4.4" fill="#58c058" stroke="#3a9a3a" stroke-width=".5"/></svg>
<svg class="a" style="left:331px;top:455px" width="14" height="16" viewBox="0 0 14 16"><path d="M1 3.2C1 1.4 13 1.4 13 3.2V12.6C13 14.8 1 14.8 1 12.6Z" fill="#f5c340" stroke="#d89820" stroke-width="1"/><ellipse cx="7" cy="3.4" rx="5.2" ry="1.6" fill="#fde9a0"/><path d="M3 5V12" stroke="#fde7a0" stroke-width="1.2"/></svg>
<svg class="a" style="left:332px;top:500px" width="17" height="17" viewBox="0 0 17 17"><path d="M.8 .8H6.5L9 3.3V11.5H.8Z" fill="#eef0f6" stroke="#b8c0d0" stroke-width=".8"/><path d="M6.5 4.5H12.8L15.6 7.3V15.8H6.5Z" fill="#f4f6fa" stroke="#b8c0d0" stroke-width=".8"/></svg>
<svg class="a" style="left:329px;top:779px" width="19" height="22" viewBox="0 0 19 22"><path d="M1 1L18 11L1 21Z" fill="#5b7db8"/></svg>
<div class="a" style="left:371px;top:301px;width:858px;height:470px;background:#fff;border:1px solid #c6c6c6"></div>
<div class="a" style="left:491px;top:302px;width:718px;height:5px;background:#e6e6e6"></div>
<div class="a" style="left:491px;top:316px;width:718px;height:5px;background:#e6e6e6"></div>
<svg class="a" style="left:0;top:0" width="1920" height="919" viewBox="0 0 1920 919"><g font-family="Liberation Sans" font-size="8" fill="#333" text-anchor="middle"><text x="528.8" y="315">1</text><text x="566.6" y="315">2</text><text x="604.4" y="315">3</text><text x="642.2" y="315">4</text><text x="680.0" y="315">5</text><text x="717.8" y="315">6</text><text x="755.6" y="315">7</text><text x="793.4" y="315">8</text><text x="831.2" y="315">9</text><text x="869.0" y="315">10</text><text x="906.8" y="315">11</text><text x="944.6" y="315">12</text><text x="982.4" y="315">13</text><text x="1020.2" y="315">14</text><text x="1058.0" y="315">15</text><text x="1095.8" y="315">16</text><text x="1133.6" y="315">17</text><text x="1171.4" y="315">18</text><text x="1209.2" y="315">19</text></g><g fill="#8a3030"><rect x="509.4" y="311" width="1.2" height="1.2"/><rect x="547.2" y="311" width="1.2" height="1.2"/><rect x="585.0" y="311" width="1.2" height="1.2"/><rect x="622.8" y="311" width="1.2" height="1.2"/><rect x="660.6" y="311" width="1.2" height="1.2"/><rect x="698.4" y="311" width="1.2" height="1.2"/><rect x="736.2" y="311" width="1.2" height="1.2"/><rect x="774.0" y="311" width="1.2" height="1.2"/><rect x="811.8" y="311" width="1.2" height="1.2"/><rect x="849.6" y="311" width="1.2" height="1.2"/><rect x="887.4" y="311" width="1.2" height="1.2"/><rect x="925.2" y="311" width="1.2" height="1.2"/><rect x="963.0" y="311" width="1.2" height="1.2"/><rect x="1000.8" y="311" width="1.2" height="1.2"/><rect x="1038.6" y="311" width="1.2" height="1.2"/><rect x="1076.4" y="311" width="1.2" height="1.2"/><rect x="1114.2" y="311" width="1.2" height="1.2"/><rect x="1152.0" y="311" width="1.2" height="1.2"/><rect x="1189.8" y="311" width="1.2" height="1.2"/></g></svg>
<div class="a" style="left:372px;top:321px;width:119px;height:79px;background:#93d3fc"></div>
<div class="a" style="left:458px;top:321px;width:9px;height:79px;background:#a0cdea"></div>
<div class="a" style="left:472px;top:321px;width:5px;height:79px;background:#a0cdea"></div>
<div class="a" style="left:486px;top:321px;width:4px;height:79px;background:#a0cdea"></div>
<div class="a" style="left:477px;top:321px;width:9px;height:79px;background:#fff"></div>
<div class="a" style="left:491px;top:321px;width:718px;height:79px;background-image:radial-gradient(circle at 0.5px 0.5px,#c4c4c4 0.7px,transparent 0.8px);background-size:9.45px 9.45px;background-position:9.2px 9.2px"></div>
<svg class="a" style="left:472px;top:321px" width="16" height="79" viewBox="0 0 16 79"><g font-family="Liberation Sans" font-size="8" fill="#333" text-anchor="middle"><text x="11" y="40.0">1</text><text x="11" y="77.8">2</text></g><g fill="#8a3030"><rect x="8.4" y="18.3" width="1.2" height="1.2"/><rect x="8.4" y="56.1" width="1.2" height="1.2"/></g></svg>
<div class="a" style="left:372px;top:410px;width:119px;height:94px;background:#ffa500"></div>
<div class="a" style="left:458px;top:410px;width:9px;height:94px;background:#e8ad40"></div>
<div class="a" style="left:472px;top:410px;width:5px;height:94px;background:#e8ad40"></div>
<div class="a" style="left:486px;top:410px;width:4px;height:94px;background:#e8ad40"></div>
<div class="a" style="left:477px;top:410px;width:9px;height:94px;background:#fff"></div>
<div class="a" style="left:491px;top:410px;width:718px;height:94px;background-image:radial-gradient(circle at 0.5px 0.5px,#c4c4c4 0.7px,transparent 0.8px);background-size:9.45px 9.45px;background-position:9.2px 9.2px"></div>
<svg class="a" style="left:472px;top:410px" width="16" height="94" viewBox="0 0 16 94"><g font-family="Liberation Sans" font-size="8" fill="#333" text-anchor="middle"><text x="11" y="40.0">1</text><text x="11" y="77.8">2</text></g><g fill="#8a3030"><rect x="8.4" y="18.3" width="1.2" height="1.2"/><rect x="8.4" y="56.1" width="1.2" height="1.2"/></g></svg>
<div class="a" style="left:372px;top:514px;width:119px;height:38px;background:#ffa500"></div>
<div class="a" style="left:458px;top:514px;width:9px;height:38px;background:#e8ad40"></div>
<div class="a" style="left:472px;top:514px;width:5px;height:38px;background:#e8ad40"></div>
<div class="a" style="left:486px;top:514px;width:4px;height:38px;background:#e8ad40"></div>
<div class="a" style="left:477px;top:514px;width:9px;height:38px;background:#fff"></div>
<div class="a" style="left:491px;top:514px;width:718px;height:38px;background-image:radial-gradient(circle at 0.5px 0.5px,#c4c4c4 0.7px,transparent 0.8px);background-size:9.45px 9.45px;background-position:9.2px 9.2px"></div>
<div class="a" style="left:372px;top:561px;width:119px;height:123px;background:#ffa500"></div>
<div class="a" style="left:458px;top:561px;width:9px;height:123px;background:#e8ad40"></div>
<div class="a" style="left:472px;top:561px;width:5px;height:123px;background:#e8ad40"></div>
<div class="a" style="left:486px;top:561px;width:4px;height:123px;background:#e8ad40"></div>
<div class="a" style="left:477px;top:561px;width:9px;height:123px;background:#fff"></div>
<div class="a" style="left:491px;top:561px;width:718px;height:123px;background-image:radial-gradient(circle at 0.5px 0.5px,#c4c4c4 0.7px,transparent 0.8px);background-size:9.45px 9.45px;background-position:9.2px 9.2px"></div>
<svg class="a" style="left:472px;top:561px" width="16" height="123" viewBox="0 0 16 123"><g font-family="Liberation Sans" font-size="8" fill="#333" text-anchor="middle"><text x="11" y="40.0">1</text><text x="11" y="77.8">2</text><text x="11" y="115.6">3</text></g><g fill="#8a3030"><rect x="8.4" y="18.3" width="1.2" height="1.2"/><rect x="8.4" y="56.1" width="1.2" height="1.2"/><rect x="8.4" y="93.9" width="1.2" height="1.2"/></g></svg>
<div class="a" style="left:372px;top:693px;width:119px;height:49px;background:#93d3fc"></div>
<div class="a" style="left:458px;top:693px;width:9px;height:49px;background:#a0cdea"></div>
<div class="a" style="left:472px;top:693px;width:5px;height:49px;background:#a0cdea"></div>
<div class="a" style="left:486px;top:693px;width:4px;height:49px;background:#a0cdea"></div>
<div class="a" style="left:477px;top:693px;width:9px;height:49px;background:#fff"></div>
<div class="a" style="left:491px;top:693px;width:718px;height:49px;background-image:radial-gradient(circle at 0.5px 0.5px,#c4c4c4 0.7px,transparent 0.8px);background-size:9.45px 9.45px;background-position:9.2px 9.2px"></div>
<svg class="a" style="left:472px;top:693px" width="16" height="49" viewBox="0 0 16 49"><g font-family="Liberation Sans" font-size="8" fill="#333" text-anchor="middle"><text x="11" y="40.0">1</text></g><g fill="#8a3030"><rect x="8.4" y="18.3" width="1.2" height="1.2"/></g></svg>
<div class="a" style="left:372px;top:400px;width:119px;height:10px;background:#c0c0c0"></div>
<div class="a" style="left:491px;top:400px;width:718px;height:10px;background:#ebebeb"></div>
<div class="a" style="left:372px;top:504px;width:119px;height:10px;background:#c0c0c0"></div>
<div class="a" style="left:491px;top:504px;width:718px;height:10px;background:#ebebeb"></div>
<div class="a" style="left:372px;top:552px;width:119px;height:9px;background:#c0c0c0"></div>
<div class="a" style="left:491px;top:552px;width:718px;height:9px;background:#ebebeb"></div>
<div class="a" style="left:372px;top:684px;width:119px;height:9px;background:#c0c0c0"></div>
<div class="a" style="left:491px;top:684px;width:718px;height:9px;background:#ebebeb"></div>
<div class="a" style="left:372px;top:742px;width:119px;height:9px;background:#c0c0c0"></div>
<div class="a" style="left:491px;top:742px;width:718px;height:9px;background:#ebebeb"></div>
<div class="t" style="left:388px;top:365px;font-size:11px;letter-spacing:-0.3px;color:#000;transform:translate(-50%,-50%) rotate(-90deg)">ReportTitle</div>
<div class="t" style="left:388px;top:462.5px;font-size:11px;letter-spacing:-0.3px;color:#000;transform:translate(-50%,-50%) rotate(-90deg)">DataHeader</div>
<div class="t" style="left:372px;top:527.5px;font-size:11px;letter-spacing:-0.5px;color:#000">DataAssets</div>
<div class="t" style="left:388px;top:627.5px;font-size:11px;letter-spacing:-0.3px;color:#000;transform:translate(-50%,-50%) rotate(-90deg)">DataFooter</div>
<div class="t" style="left:388px;top:723px;font-size:11px;letter-spacing:-0.3px;color:#000;transform:translate(-50%,-50%) rotate(-90deg)">PageFooter</div>
<svg class="a" style="left:0;top:0" width="1920" height="919" viewBox="0 0 1920 919"><g stroke="#a0a0a0" stroke-width="1.6" stroke-dasharray="5 2" fill="none"><path d="M491 321H1209"/><path d="M491 320V751"/><path d="M1209 320V751"/></g></svg>
<svg class="a" style="left:0;top:0" width="1920" height="919" viewBox="0 0 1920 919">
<rect x="491" y="395" width="719" height="3" fill="#606060"/>
<path d="M529 334.5C529 331 531 330 533 330H543.5C545.5 330 547.5 331 547.5 334.5Z" fill="#000"/>
<rect x="513.2" y="333.5" width="49.8" height="6.8" rx="1.5" fill="#000"/>
<path d="M516.6 340.3H559.6L557.5 384.5C557.3 387 555.5 388.8 553 388.8H523.5C521 388.8 519.2 387 519 384.5Z" fill="#9a9a9a"/>
<text x="603.4" y="366.1" font-family="Liberation Sans" font-weight="bold" font-size="20" fill="#0a3c84">Likwidacja zasobów</text>
<path fill="#3f51a9" fill-rule="evenodd" d="M1095.5 344.5L1104.4 328.3H1123.6L1132.5 344.5L1123.6 360.8H1104.4ZM1100 344.5L1107 331.8H1121L1128 344.5L1121 357.3H1107Z"/>
<path fill="#3f51a9" d="M1137 328.3H1143.7L1150.4 338.5L1148.6 341.5ZM1148.6 347.5L1150.4 350.5L1143.7 360.8H1137ZM1170.9 328.3H1163.8L1157 338.8L1159 341.5ZM1159 347.5L1157 350.5L1163.8 360.8H1170.9Z"/>
<text x="1088.4" y="380.9" font-family="Liberation Sans" font-weight="bold" font-size="13.2" fill="#000">Infonet Projekt</text>
<g fill="#222"><rect x="1127" y="386.3" width="4" height="1.3"/><rect x="1134" y="386.3" width="1.5" height="1.3"/><rect x="1137.5" y="386.3" width="1.5" height="1.3"/></g>
<rect x="1057" y="387.5" width="152" height="7" fill="#fff"/>
<g fill="#c4c4c4"><rect x="1057.8" y="386.9" width="1" height="1"/><rect x="1067.2" y="386.9" width="1" height="1"/><rect x="1076.7" y="386.9" width="1" height="1"/><rect x="1086.1" y="386.9" width="1" height="1"/><rect x="1095.6" y="386.9" width="1" height="1"/><rect x="1105.0" y="386.9" width="1" height="1"/><rect x="1114.5" y="386.9" width="1" height="1"/><rect x="1124.0" y="386.9" width="1" height="1"/><rect x="1133.4" y="386.9" width="1" height="1"/><rect x="1142.8" y="386.9" width="1" height="1"/><rect x="1152.3" y="386.9" width="1" height="1"/><rect x="1161.7" y="386.9" width="1" height="1"/><rect x="1171.2" y="386.9" width="1" height="1"/><rect x="1180.6" y="386.9" width="1" height="1"/><rect x="1190.1" y="386.9" width="1" height="1"/><rect x="1199.5" y="386.9" width="1" height="1"/></g>
<g stroke="#cf6a6a" stroke-width="1.2" fill="none">
<path d="M509.5 334.5V330.5H513.5M563 330.5H567V334.5M509.5 383.5V387.5H513.5M563 387.5H567V383.5"/>
<path d="M595 326V322H599M987 322H991V326M595 391.5V395.5H599M987 395.5H991V391.5"/>
<path d="M1095.5 325V321H1099.5M1167.5 321H1171.5V325M1095.5 364V368H1099.5M1167.5 368H1171.5V364"/>
<path d="M1057.5 372V368H1061.5M1205 368H1209V372M1057.5 383V387H1061.5M1205 387H1209V383"/>
</g>
<rect x="491" y="476" width="718" height="28" fill="#d3d3d3"/>
<g stroke="#e2e2e2" stroke-width="1"><path d="M519.5 477V503"/><path d="M717.5 477V503"/><path d="M859 477V503"/><path d="M982.5 477V503"/><path d="M1105.5 477V503"/></g>
<path d="M505.5 452.3L495.2 462.8" stroke="#9a9a9a" stroke-width="2.3"/><path d="M494.8 452.3L506 462.3" stroke="#000" stroke-width="2.3"/>
<text x="525.5" y="460.4" font-family="Liberation Sans" font-size="13.2" fill="#000">Likwidowany zakres</text>
<g font-family="Liberation Sans" font-weight="bold" font-size="13" fill="#000">
<text x="499.5" y="495" font-size="11">Lp.</text><text x="525.5" y="495.8">Nazwa</text><text x="723" y="495.8" letter-spacing="0.2">Model</text><text x="865.8" y="495.8">S/N</text><text x="988.4" y="495.8">Nr inw.</text><text x="1110.9" y="495.8">Data</text>
</g>
<defs><clipPath id="c1"><rect x="491" y="514" width="28.5" height="38"/></clipPath><clipPath id="c2"><rect x="982" y="514" width="123.5" height="38"/></clipPath><clipPath id="c3"><rect x="1105" y="514" width="104" height="38"/></clipPath></defs>
<g font-family="Liberation Sans" font-size="13" fill="#000" letter-spacing="0.1">
<text x="497.2" y="539" clip-path="url(#c1)">[Row#]</text><text x="525.5" y="539">[Assets.Name]</text><text x="723" y="539">[Assets.Model]</text><text x="865.8" y="539">[Assets.SerialNo]</text><text x="988.4" y="539" clip-path="url(#c2)">[Assets.InventoryNo]</text><text x="1110.9" y="539" clip-path="url(#c3)">[FormatDateTime]</text>
</g>
<g stroke="#cf6a6a" stroke-width="1.2" fill="none">
<path d="M490.5 452V448H494.5M506 448H510V452M490.5 462V466H494.5M506 466H510V462"/>
<path d="M519 452V448H523M666.5 448H670.5V452M519 462.5V466.5H523M666.5 466.5H670.5V462.5"/>
<path d="M491 480.5V476.5H495M515.5 476.5H519.5V480.5M491 500V504H495M515.5 504H519.5V500"/>
<path d="M491 518V514H495M515.5 514H519.5V518M491 547.5V551.5H495M515.5 551.5H519.5V547.5"/>
<path d="M519.5 480.5V476.5H523.5M713.5 476.5H717.5V480.5M519.5 500V504H523.5M713.5 504H717.5V500"/>
<path d="M519.5 518V514H523.5M713.5 514H717.5V518M519.5 547.5V551.5H523.5M713.5 551.5H717.5V547.5"/>
<path d="M717.5 480.5V476.5H721.5M855 476.5H859V480.5M717.5 500V504H721.5M855 504H859V500"/>
<path d="M717.5 518V514H721.5M855 514H859V518M717.5 547.5V551.5H721.5M855 551.5H859V547.5"/>
<path d="M859 480.5V476.5H863M978.5 476.5H982.5V480.5M859 500V504H863M978.5 504H982.5V500"/>
<path d="M859 518V514H863M978.5 514H982.5V518M859 547.5V551.5H863M978.5 551.5H982.5V547.5"/>
<path d="M982.5 480.5V476.5H986.5M1101.5 476.5H1105.5V480.5M982.5 500V504H986.5M1101.5 504H1105.5V500"/>
<path d="M982.5 518V514H986.5M1101.5 514H1105.5V518M982.5 547.5V551.5H986.5M1101.5 551.5H1105.5V547.5"/>
<path d="M1105.5 480.5V476.5H1109.5M1204.5 476.5H1208.5V480.5M1105.5 500V504H1109.5M1204.5 504H1208.5V500"/>
<path d="M1105.5 518V514H1109.5M1204.5 514H1208.5V518M1105.5 547.5V551.5H1109.5M1204.5 551.5H1208.5V547.5"/>
</g>
<text x="903.9" y="649.8" font-family="Liberation Sans" font-style="italic" font-size="13" fill="#222">[FormatDateTin</text>
<rect x="898" y="655" width="307" height="1" fill="#000"/>
<text x="1031.3" y="670.4" font-family="Liberation Sans" font-size="10.5" fill="#000">(podpis)</text>
<g stroke="#cf6a6a" stroke-width="1.2" fill="none">
<path d="M897 641.5V637.5H901M987 637.5H991V641.5M897 651.5V655.5H901M987 655.5H991V651.5"/>
<path d="M897 664V660H901M1195 660H1199V664M897 675.5V679.5H901M1195 679.5H1199V675.5"/>
</g>
<rect x="500" y="693" width="717.5" height="1.2" fill="#555"/>
<text x="506.5" y="715.3" font-family="Liberation Sans" font-size="13" fill="#000">Oxari</text>
<defs><clipPath id="c4"><rect x="775" y="702" width="254" height="19.5"/></clipPath><clipPath id="c5"><rect x="1151" y="702" width="20" height="19.5"/></clipPath><clipPath id="c6"><rect x="1181" y="702" width="29.5" height="19.5"/></clipPath></defs>
<g font-family="Liberation Sans" font-size="13" fill="#000"><g clip-path="url(#c4)"><text x="780.3" y="709.7">[FormatDateTime([Date], "dd.MM.yyyy</text><text x="780.3" y="724.6">HH:mm:ss")]</text></g>
<text x="1106" y="715.8">Strona:</text><text x="1168" y="715.8" text-anchor="end" clip-path="url(#c5)">[Page]</text><text x="1177.2" y="715.8">/</text><text x="1187" y="715.8" clip-path="url(#c6)">[TotalPages]</text></g>
<g fill="none" stroke="#8a8a8a" stroke-width="1.4"><rect x="765.5" y="708.5" width="8.5" height="6" rx="1"/><path d="M767.5 708V706H772V708M767.5 711.5H772"/></g>
<g stroke="#cf6a6a" stroke-width="1.2" fill="none">
<path d="M500.5 706.5V702.5H504.5M620 702.5H624V706.5M500.5 717.5V721.5H504.5M620 721.5H624V717.5"/>
<path d="M774.5 706.5V702.5H778.5M1025 702.5H1029V706.5M774.5 717.5V721.5H778.5M1025 721.5H1029V717.5"/>
<path d="M1076.5 706.5V702.5H1080.5M1148 702.5H1152V706.5M1076.5 717.5V721.5H1080.5M1148 721.5H1152V717.5"/>
<path d="M1152 706.5V702.5H1156M1167 702.5H1171V706.5M1152 717.5V721.5H1156M1167 721.5H1171V717.5"/>
<path d="M1171 706.5V702.5H1175M1177 702.5H1181V706.5M1171 717.5V721.5H1175M1177 721.5H1181V717.5"/>
<path d="M1181 706.5V702.5H1185M1203.5 702.5H1207.5V706.5M1181 717.5V721.5H1185M1203.5 721.5H1207.5V717.5"/>
</g>
</svg>
<svg class="a" style="left:0;top:0" width="1920" height="919" viewBox="0 0 1920 919"><defs><filter id="sh" x="-50%" y="-50%" width="200%" height="200%"><feGaussianBlur in="SourceAlpha" stdDeviation="2.2"/><feOffset dx="3" dy="3" result="b"/><feComponentTransfer><feFuncA type="linear" slope="0.45"/></feComponentTransfer><feMerge><feMergeNode/><feMergeNode in="SourceGraphic"/></feMerge></filter></defs>
<path filter="url(#sh)" fill="#8fd540" d="M540.9 268.5L596.6 203.6L591 200.5L617.5 189L607.8 215.6L604.2 211.8L542.3 269.6Z"/></svg>
</body></html>
